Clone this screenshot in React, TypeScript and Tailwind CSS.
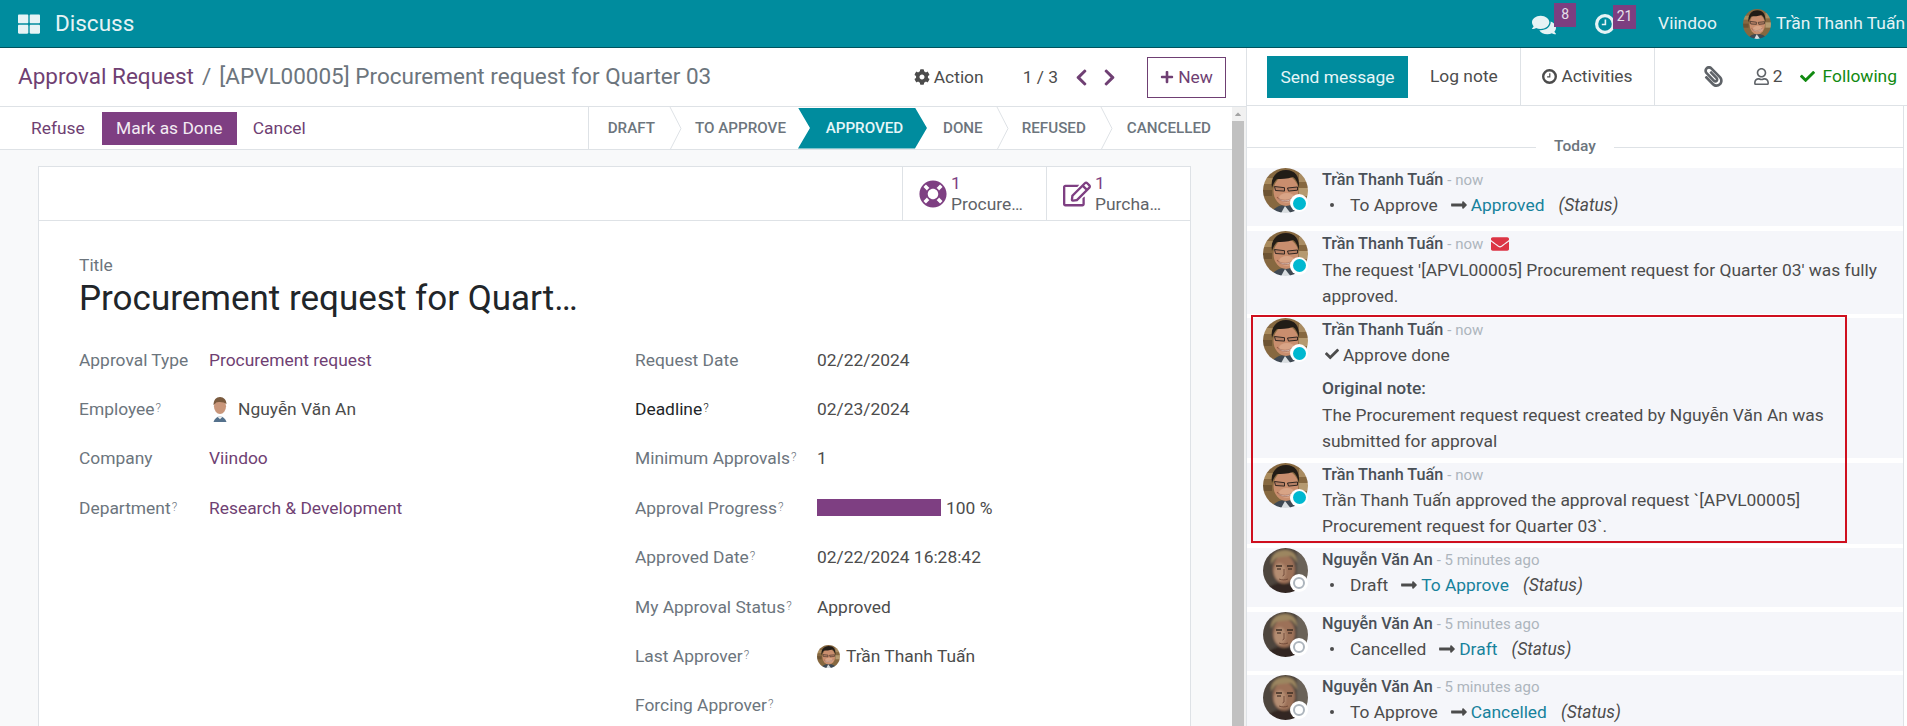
import React from "react";
import {
  FaThLarge, FaComments, FaCog, FaChevronLeft, FaChevronRight, FaPlus, FaLifeRing,
  FaRegEdit, FaPaperclip, FaRegUser, FaCheck, FaEnvelope, FaLongArrowAltRight, FaCaretUp,
} from "react-icons/fa";

function Face({ kind, className }: { kind: "tuan" | "an"; className?: string }) {
  if (kind === "tuan") {
    return (
      <svg viewBox="0 0 45 45" preserveAspectRatio="none" className={className}>
        <defs>
          <clipPath id="ct"><ellipse cx="22.5" cy="22.5" rx="22.5" ry="22.5" /></clipPath>
          <filter id="bt" x="-10%" y="-10%" width="120%" height="120%"><feGaussianBlur stdDeviation="0.7" /></filter>
        </defs>
        <g clipPath="url(#ct)">
          <g filter="url(#bt)">
            <rect x="-2" y="-2" width="49" height="49" fill="#86683f" />
            <rect x="-2" y="10" width="12" height="6" fill="#a98a5c" />
            <rect x="-2" y="22" width="11" height="6" fill="#6d5233" />
            <rect x="36" y="6" width="11" height="8" fill="#a98c62" />
            <rect x="36" y="20" width="11" height="8" fill="#b59a70" />
            <path d="M8 47c1-7 8-10 15-10s14 3 16 10z" fill="#3f4a52" />
            <path d="M17 47l5-9 7 9z" fill="#d9dde0" />
            <ellipse cx="23" cy="23" rx="12.5" ry="15" fill="#c98e6e" />
            <ellipse cx="24" cy="30" rx="8" ry="5" fill="#d8a486" />
            <path d="M9 20c-2-11 5-18 14-18s14 6 13 18c-1-5-3-9-6-11-6 2-12 2-16 2-2 2-4 5-5 9z" fill="#231c19" />
          </g>
          <path d="M11.5 18.5l10 1.2v3.4l-9-.6zM24.5 20l10-1v3.2l-9 .9z" fill="#3b302c" fillOpacity=".15" stroke="#231d1b" strokeWidth=".9" />
          <path d="M14 29c4 4.5 12 4.5 17 -.5-2 6-14 7-17 .5z" fill="#f3e7df" stroke="#80402f" strokeWidth=".5" />
        </g>
      </svg>
    );
  }
  return (
    <svg viewBox="0 0 45 45" preserveAspectRatio="none" className={className}>
      <defs>
        <clipPath id="ca"><circle cx="22.5" cy="22.5" r="22.5" /></clipPath>
        <filter id="ba" x="-10%" y="-10%" width="120%" height="120%"><feGaussianBlur stdDeviation="0.9" /></filter>
      </defs>
      <g clipPath="url(#ca)">
        <g filter="url(#ba)">
          <rect x="-2" y="-2" width="49" height="49" fill="#4d443e" />
          <rect x="34" y="0" width="13" height="30" fill="#6b6259" />
          <path d="M2 47c2-9 9-12 17-12s17 3 20 12z" fill="#332820" />
          <ellipse cx="21" cy="21" rx="11" ry="14.5" fill="#9c7158" />
          <ellipse cx="17" cy="24" rx="6" ry="9" fill="#b48d72" />
          <path d="M8 17C7 7 14 2 22 2s12 5 12 13c-2-3-4-6-7-7-6 1-11 1-14 2-2 2-4 4-5 7z" fill="#9c8660" />
        </g>
        <path d="M13 18h6M24 18h6" stroke="#3d2c22" strokeWidth="1.3" />
        <path d="M14 21h4M25 21h4" stroke="#2e2019" strokeWidth="1.2" />
        <path d="M21 21v6l-1.5 1M16 31c3 1.2 6 1.2 9 0" stroke="#6d4636" strokeWidth=".9" fill="none" />
      </g>
    </svg>
  );
}

function Clock({ size, ring, hand }: { size: number; ring: string; hand: string }) {
  return (
    <svg width={size} height={size} viewBox="0 0 20 20" className="shrink-0">
      <circle cx="10" cy="10" r="8.4" fill="none" stroke={ring} strokeWidth="3.2" />
      <path d="M10.4 5.5v5H6.8" fill="none" stroke={hand} strokeWidth="1.6" />
    </svg>
  );
}

function Sep() {
  return (
    <svg width="13" height="43" viewBox="0 0 13 43" className="shrink-0">
      <path d="M1 0l11 21.5L1 43" fill="none" stroke="#dee2e6" strokeWidth="1" />
    </svg>
  );
}

function Q() {
  return <sup className="text-[12px] leading-none ml-[1px] relative top-[-3px] font-light">?</sup>;
}

function Row({ label, q, dark, w, children }: { label: string; q?: boolean; dark?: boolean; w: string; children?: React.ReactNode }) {
  return (
    <div className="flex items-center h-[49.4px]">
      <div className={`${w} shrink-0 whitespace-nowrap ${dark ? "text-[#212529]" : "text-[#6c757d]"}`}>
        {label}
        {q && <Q />}
      </div>
      <div className="flex items-center text-[#4c4c4c] whitespace-nowrap">{children}</div>
    </div>
  );
}

function Msg({
  who, time, env, children, h,
}: { who: "tuan" | "an"; time: string; env?: boolean; children: React.ReactNode; h: string }) {
  return (
    <div className={`flex bg-[#f5f6fa] mb-[4.5px] ${h}`}>
      <div className="relative w-[45px] h-[45px] ml-[16px] mr-[14px] shrink-0">
        <Face kind={who} className="w-[45px] h-[45px]" />
        <div className="absolute right-0 bottom-[1px] w-[18px] h-[18px] rounded-full bg-white flex items-center justify-center">
          {who === "tuan" ? (
            <div className="w-[13px] h-[13px] rounded-full bg-[#00b8d0]" />
          ) : (
            <div className="w-[12px] h-[12px] rounded-full border-2 border-[#adb5bd]" />
          )}
        </div>
      </div>
      <div className="flex-1 min-w-0 leading-[26px] text-[#4c4c4c]">
        <div className={`flex items-center ${env ? "h-[26px]" : "h-[24px]"}`}>
          <span className="font-medium text-[#495057] text-[16.2px]">{who === "tuan" ? "Trần Thanh Tuấn" : "Nguyễn Văn An"}</span>
          <span className="text-[#adb5bd] text-[15px] ml-[4px]">- {time}</span>
          {env && <FaEnvelope className="text-[18px] text-[#dc3545] ml-[8px]" />}
        </div>
        <div>{children}</div>
      </div>
    </div>
  );
}

function Track({ from, to }: { from: string; to: string }) {
  return (
    <div className="flex items-center h-[26px]">
      <span className="w-[4px] h-[4px] rounded-full bg-[#4c4c4c] ml-[8px] mr-[16px]" />
      <span>{from}</span>
      <FaLongArrowAltRight className="text-[#4c4c4c] text-[18px] ml-[12px] mr-[3px]" />
      <span className="text-[#17829c]">{to}</span>
      <span className="italic ml-[14px]">(Status)</span>
    </div>
  );
}

export default function App() {
  return (
    <div className="relative h-[726px] overflow-hidden bg-white font-['Roboto',sans-serif] text-[17.4px] text-[#4c4c4c]">
      {/* navbar */}
      <div className="h-[48px] bg-[#008c9e] border-b border-[#00535e] flex items-center text-white">
        <FaThLarge className="ml-[18px] text-[22px] text-[#e6f3f5]" />
        <span className="ml-[15px] text-[22.5px] text-[#e6f3f5]">Discuss</span>
        <div className="ml-auto flex items-center h-full">
          <div className="relative w-[46px] flex items-center">
            <FaComments className="text-[24px] text-[#e6f3f5] mt-[2px]" />
            <span className="absolute left-[22px] top-[-8px] w-[22px] h-[24px] bg-[#7c3e80] text-[#e6e0ea] text-[14px] flex items-center justify-center">8</span>
          </div>
          <div className="relative w-[63px] ml-[17px] flex items-center">
            <Clock size={20} ring="#e6f3f5" hand="#e6f3f5" />
            <span className="absolute left-[18px] top-[-9px] w-[23px] h-[24px] bg-[#7c3e80] text-[#e6e0ea] text-[14px] flex items-center justify-center">21</span>
          </div>
          <span className="text-[#e6f3f5]">Viindoo</span>
          <Face kind="tuan" className="w-[28px] h-[30px] ml-[26px] mr-[5px]" />
          <span className="text-[#e6f3f5] mr-[2px] whitespace-nowrap">Trần Thanh Tuấn</span>
        </div>
      </div>

      <div className="flex h-[678px]">
        {/* left pane */}
        <div className="w-[1247px] shrink-0 border-r border-[#dee2e6] flex flex-col">
          <div className="h-[59px] shrink-0 flex items-center border-b border-[#dee2e6]">
            <span className="ml-[18px] text-[22.5px] text-[#6f3f73] whitespace-nowrap">Approval Request</span>
            <span className="ml-[8px] text-[22.5px] text-[#6c757d]">/</span>
            <span className="ml-[8px] text-[22.5px] text-[#6c757d] whitespace-nowrap">[APVL00005] Procurement request for Quarter 03</span>
            <div className="ml-auto flex items-center">
              <FaCog className="text-[16px] text-[#4c4c4c]" />
              <span className="ml-[4px]">Action</span>
              <span className="ml-[39px]">1 / 3</span>
              <FaChevronLeft className="ml-[14px] text-[19px] text-[#6f3f73]" />
              <FaChevronRight className="ml-[9px] text-[19px] text-[#6f3f73]" />
              <div className="ml-[28px] mr-[20px] w-[79px] h-[41px] border border-[#6f3f73] flex items-center justify-center text-[#6f3f73]">
                <FaPlus className="text-[14px] mr-[4px]" />
                New
              </div>
            </div>
          </div>
          <div className="flex-1 flex min-h-0">
            <div className="flex-1 min-w-0 bg-[#f8f9fa]">
              <div className="h-[43px] bg-white border-b border-[#dee2e6] flex items-center pl-[31px]">
                <span className="text-[#6f3f73]">Refuse</span>
                <span className="ml-[17px] w-[135px] h-[33px] bg-[#7e3f82] text-[#f3ecf3] flex items-center justify-center">Mark as Done</span>
                <span className="ml-[16px] text-[#6f3f73]">Cancel</span>
                <div className="ml-auto flex items-center h-full border-l border-[#dee2e6] pl-[19px] font-medium text-[#6c757d] mr-[21px] text-[15.2px]">
                  <span>DRAFT</span>
                  <span className="ml-[14px] mr-[13px] flex"><Sep /></span>
                  <span>TO APPROVE</span>
                  <span className="ml-[12px] w-[129px] h-[41px] bg-[#008c9e] text-[#e6f6f8] flex items-center justify-center pl-[4px] [clip-path:polygon(0_0,calc(100%-12px)_0,100%_50%,calc(100%-12px)_100%,0_100%,12px_50%)]">APPROVED</span>
                  <span className="ml-[16px]">DONE</span>
                  <span className="ml-[13px] mr-[13px] flex"><Sep /></span>
                  <span>REFUSED</span>
                  <span className="ml-[14px] mr-[14px] flex"><Sep /></span>
                  <span>CANCELLED</span>
                </div>
              </div>
              <div className="ml-[38px] mt-[16px] w-[1153px] h-[600px] bg-white border border-[#dee2e6]">
                <div className="h-[54px] border-b border-[#dee2e6] flex justify-end">
                  <div className="w-[144px] border-l border-[#dee2e6] flex items-center pl-[16px]">
                    <FaLifeRing className="text-[28px] text-[#7e3f82] shrink-0" />
                    <div className="ml-[4px] leading-[21px]">
                      <div className="text-[#7e3f82]">1</div>
                      <div className="text-[#5f6368] whitespace-nowrap">Procure…</div>
                    </div>
                  </div>
                  <div className="w-[144px] border-l border-[#dee2e6] flex items-center pl-[16px]">
                    <FaRegEdit className="text-[28px] text-[#7e3f82] shrink-0" />
                    <div className="ml-[4px] leading-[21px]">
                      <div className="text-[#7e3f82]">1</div>
                      <div className="text-[#5f6368] whitespace-nowrap">Purcha…</div>
                    </div>
                  </div>
                </div>
                <div className="pl-[40px]">
                  <div className="pt-[35px] leading-[18px] text-[#6c757d]">Title</div>
                  <div className="mt-[3px] text-[35px] leading-[44px] text-[#212529] whitespace-nowrap">Procurement request for Quart…</div>
                  <div className="mt-[14px] flex">
                    <div className="w-[556px] shrink-0">
                      <Row label="Approval Type" w="w-[130px]"><span className="text-[#6f3f73]">Procurement request</span></Row>
                      <Row label="Employee" q w="w-[130px]">
                        <svg viewBox="0 0 22 28" className="w-[22px] h-[26px] mr-[7px]">
                          <ellipse cx="11" cy="11" rx="6.5" ry="8.5" fill="#c9967a" />
                          <path d="M4 10c0-6 3-9 7-9s7 3 7 8c-2-3-9-3-11-2z" fill="#7a5a3e" />
                          <path d="M4 28c1-4 4-6 7-6s6 2 7 6z" fill="#54718c" />
                          <path d="M8 22l3 3 3-3z" fill="#f2f2f2" />
                        </svg>
                        Nguyễn Văn An
                      </Row>
                      <Row label="Company" w="w-[130px]"><span className="text-[#6f3f73]">Viindoo</span></Row>
                      <Row label="Department" q w="w-[130px]"><span className="text-[#6f3f73]">Research &amp; Development</span></Row>
                    </div>
                    <div>
                      <Row label="Request Date" w="w-[182px]">02/22/2024</Row>
                      <Row label="Deadline" q dark w="w-[182px]">02/23/2024</Row>
                      <Row label="Minimum Approvals" q w="w-[182px]">1</Row>
                      <Row label="Approval Progress" q w="w-[182px]">
                        <div className="w-[124px] h-[17px] bg-[#7e3f82] mr-[5px]" />
                        100 %
                      </Row>
                      <Row label="Approved Date" q w="w-[182px]">02/22/2024 16:28:42</Row>
                      <Row label="My Approval Status" q w="w-[182px]">Approved</Row>
                      <Row label="Last Approver" q w="w-[182px]">
                        <Face kind="tuan" className="w-[23px] h-[23px] mr-[6px]" />
                        Trần Thanh Tuấn
                      </Row>
                      <Row label="Forcing Approver" q w="w-[182px]" />
                    </div>
                  </div>
                </div>
              </div>
            </div>
            {/* scrollbar */}
            <div className="w-[14px] shrink-0 bg-[#f1f1f1] flex flex-col items-center pr-[2px]">
              <div className="h-[14px] flex items-center justify-center"><FaCaretUp className="text-[10px] text-[#a3a3a3]" /></div>
              <div className="w-[12px] flex-1 bg-[#c1c1c1]" />
            </div>
          </div>
        </div>

        {/* chatter */}
        <div className="flex-1 min-w-0 flex flex-col">
          <div className="h-[58px] shrink-0 flex border-b border-[#dee2e6] relative">
            <div className="ml-[20px] mt-[8px] w-[141px] h-[42px] bg-[#008c9e] text-[#e6f6f8] flex items-center justify-center">Send message</div>
            <div className="ml-[22px] w-[90px] flex items-center h-full bg-white">Log note</div>
            <div className="w-[135px] border-x border-[#dee2e6] flex items-center justify-center">
              <span className="mr-[4px]"><Clock size={15} ring="#4c4c4c" hand="#4c4c4c" /></span>
              Activities
            </div>
            <div className="ml-auto flex items-center pr-[10px]">
              <FaPaperclip className="text-[21px] text-[#5f6368] -scale-x-100" />
              <FaRegUser className="ml-[29px] text-[17px] text-[#5f6368]" />
              <span className="ml-[3px]">2</span>
              <FaCheck className="ml-[17px] mr-[8px] text-[15px] text-[#118a11]" />
              <span className="text-[#118a11]">Following</span>
            </div>
          </div>
          <div className="flex-1 min-h-0 mr-[3px] border-r border-[#dee2e6]">
            <div className="relative h-[62px]">
              <div className="absolute left-0 right-0 top-[41px] h-[1px] bg-[#dee2e6]" />
              <div className="relative w-[78px] mx-auto h-[62px] bg-white text-[#6c757d] font-medium flex items-start justify-center pt-[27px] leading-[26px] text-[15.5px]">Today</div>
            </div>
            <Msg who="tuan" time="now" h="h-[58px]"><Track from="To Approve" to="Approved" /></Msg>
            <Msg who="tuan" time="now" env h="h-[83px]">
              <div>The request '[APVL00005] Procurement request for Quarter 03' was fully</div>
              <div>approved.</div>
            </Msg>
            <Msg who="tuan" time="now" h="h-[140px]">
              <div className="flex items-center">
                <FaCheck className="text-[14px] mr-[4px] ml-[3px] mb-[3px]" />
                Approve done
              </div>
              <div className="mt-[7px] font-medium text-[#495057]">Original note:</div>
              <div className="mt-[1px]">The Procurement request request created by Nguyễn Văn An was</div>
              <div>submitted for approval</div>
            </Msg>
            <Msg who="tuan" time="now" h="h-[81px]">
              <div>Trần Thanh Tuấn approved the approval request `[APVL00005]</div>
              <div>Procurement request for Quarter 03`.</div>
            </Msg>
            <Msg who="an" time="5 minutes ago" h="h-[59px]"><Track from="Draft" to="To Approve" /></Msg>
            <Msg who="an" time="5 minutes ago" h="h-[59px]"><Track from="Cancelled" to="Draft" /></Msg>
            <Msg who="an" time="5 minutes ago" h="h-[59px]"><Track from="To Approve" to="Cancelled" /></Msg>
          </div>
        </div>
      </div>

      {/* red annotation frame */}
      <div className="absolute left-[1251px] top-[315px] w-[596px] h-[228px] border-2 border-[#cf0f1e] pointer-events-none" />
    </div>
  );
}
